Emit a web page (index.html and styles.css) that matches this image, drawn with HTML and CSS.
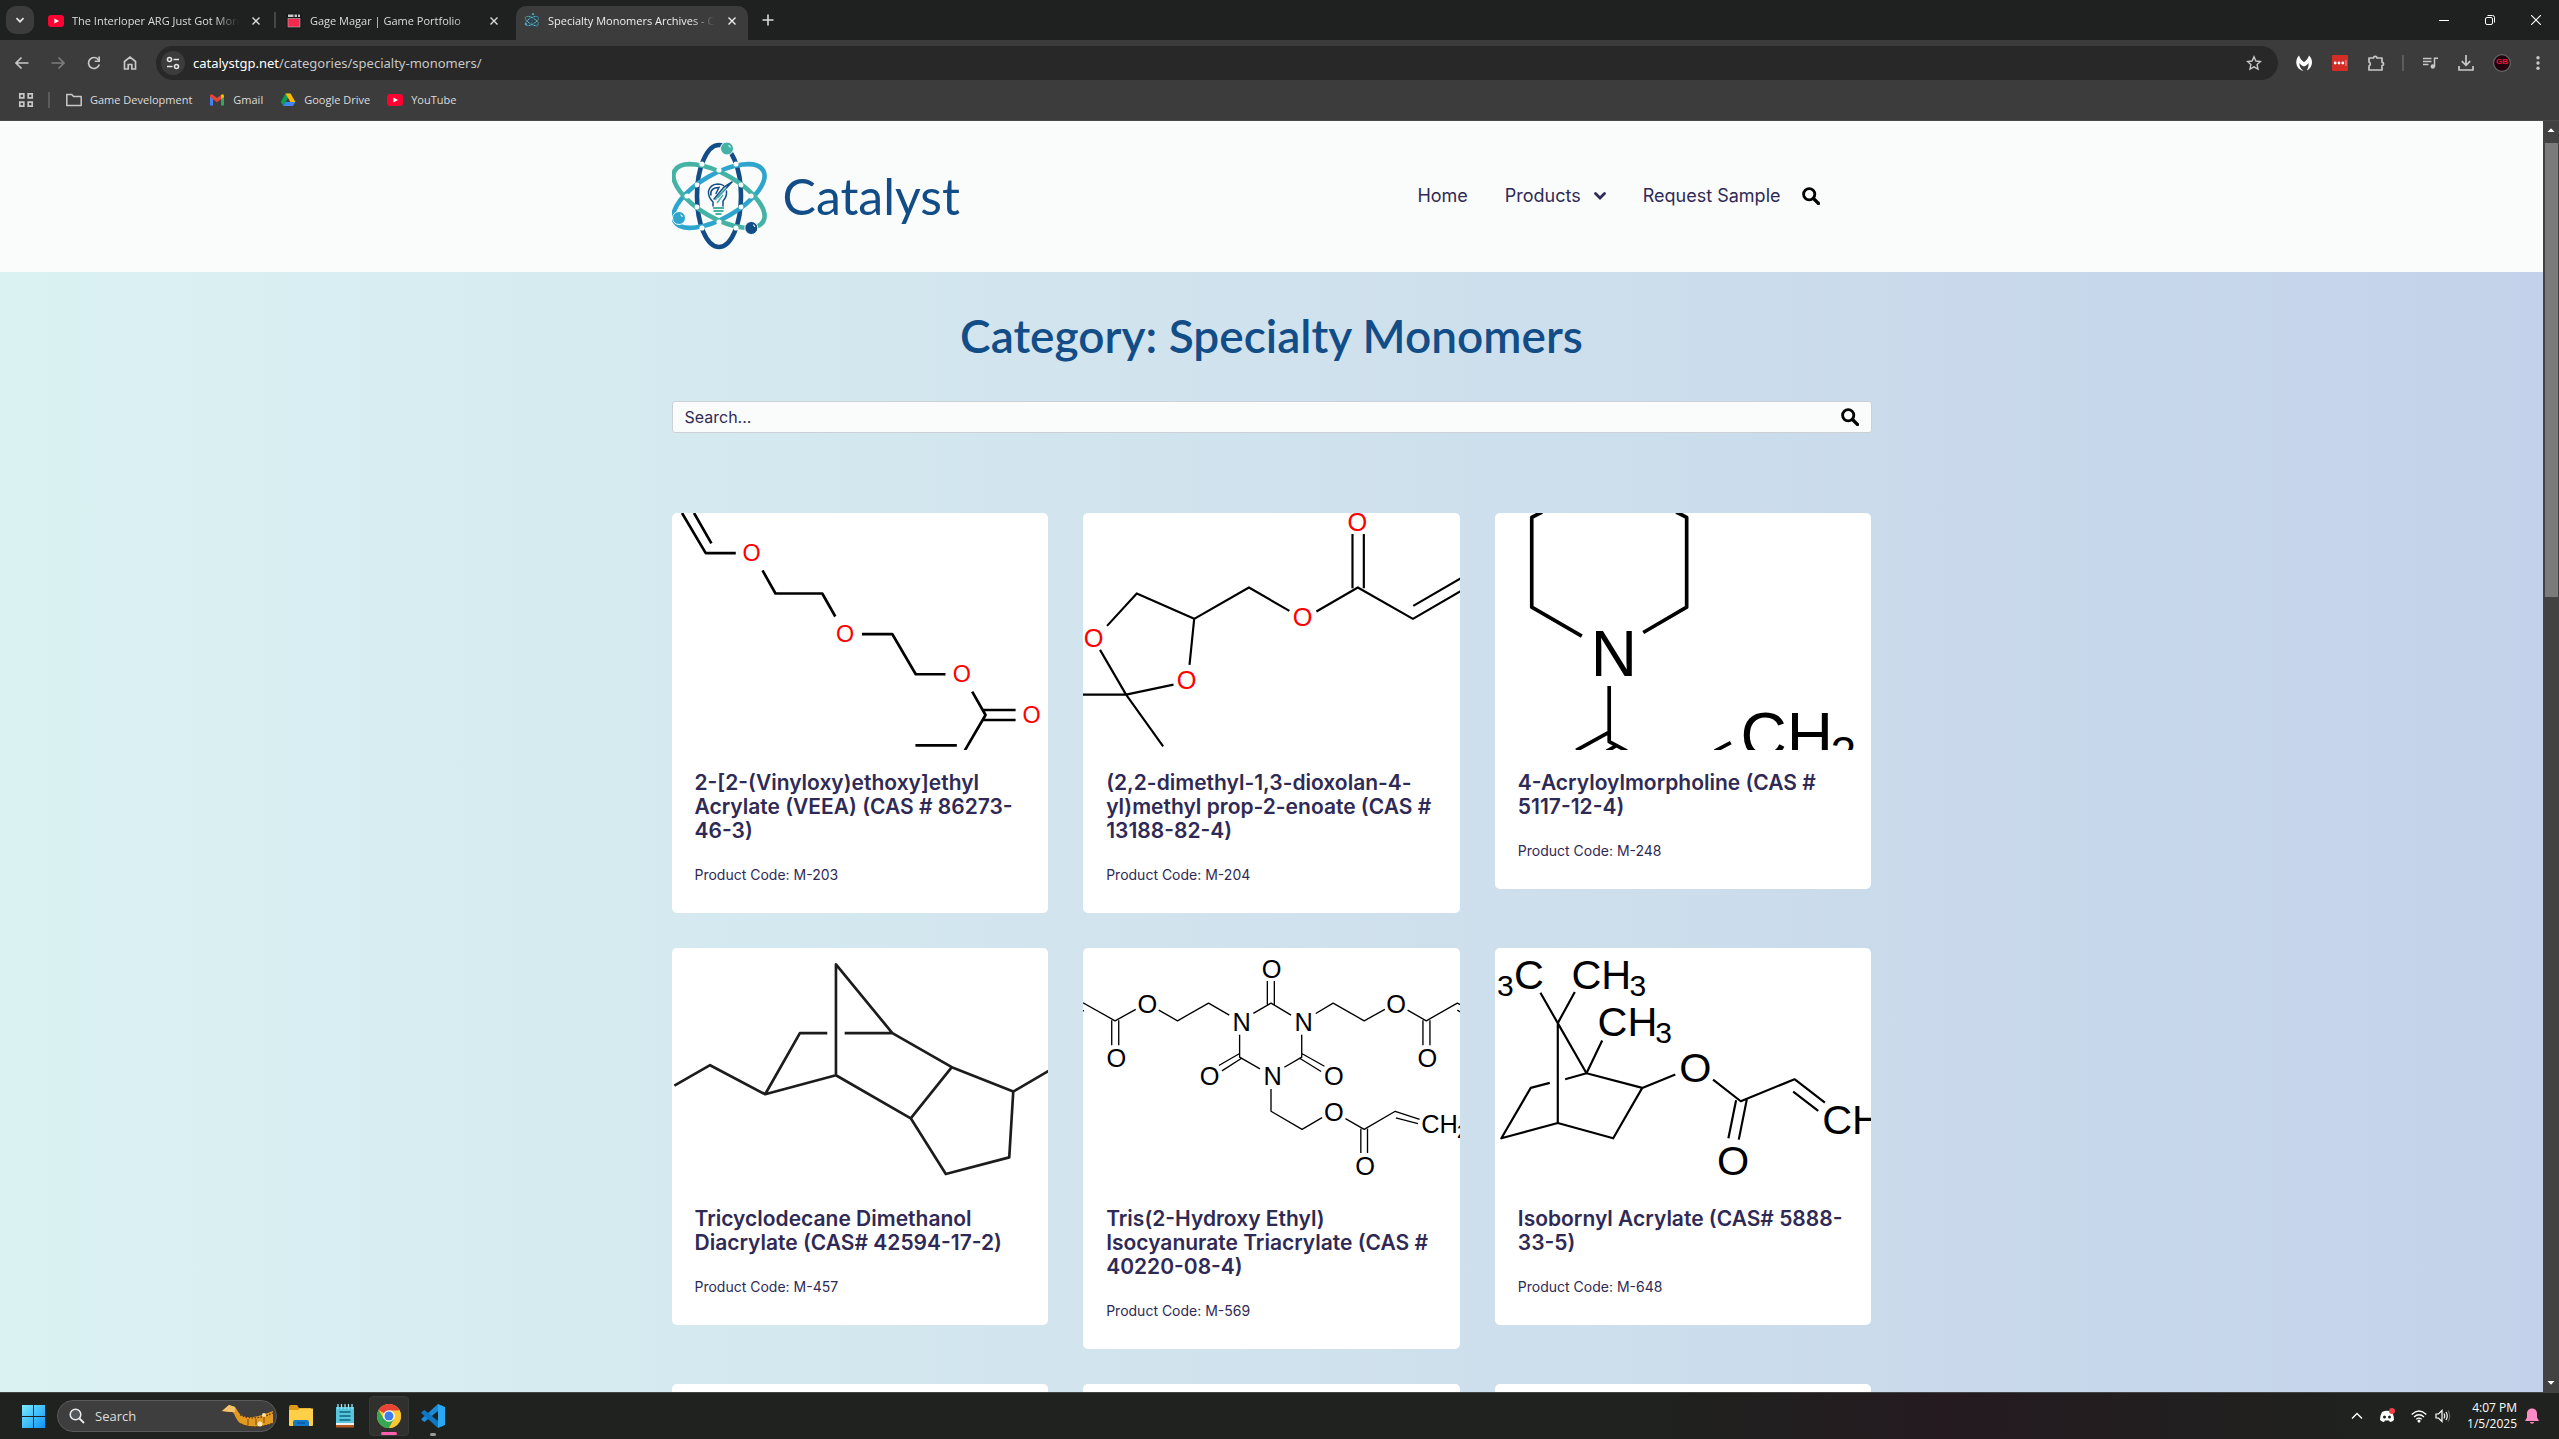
FILE: index.html
```html
<!DOCTYPE html>
<html lang="en">
<head>
<meta charset="utf-8">
<title>Specialty Monomers Archives - Catalyst</title>
<link rel="stylesheet" href="styles.css">
</head>
<body>
<svg class="defs" aria-hidden="true">
  <symbol id="close" viewBox="0 0 10 10"><path d="M1.5 1.5l7 7M8.5 1.5l-7 7" stroke="currentColor" stroke-width="1.4" fill="none"/></symbol>
  <symbol id="yt" viewBox="0 0 16 16"><rect y="2" width="16" height="12" rx="3" fill="#ff0033"/><path d="M6.4 5.4v5.2L11 8z" fill="#fff"/></symbol>
  <symbol id="search" viewBox="0 0 18 18"><circle cx="7.2" cy="7.2" r="5.6" fill="none" stroke="currentColor" stroke-width="2.8"/><path d="M11.5 11.5l5 5" stroke="currentColor" stroke-width="3.2" stroke-linecap="round"/></symbol>
  <symbol id="atom" viewBox="0 0 96 110">
    <g fill="none" stroke-width="4.6">
      <ellipse cx="47" cy="55" rx="22" ry="51" stroke="#124d87"/>
      <ellipse cx="47" cy="55" rx="22" ry="51" stroke="#2ea5cd" transform="rotate(60 47 55)"/>
      <ellipse cx="47" cy="55" rx="22" ry="51" stroke="#44b3a5" transform="rotate(-60 47 55)"/>
    </g>
    <g fill="#fafcfb"><circle cx="30" cy="23" r="2.6"/><circle cx="64" cy="23" r="2.6"/><circle cx="47" cy="29" r="2.6"/><circle cx="15" cy="55" r="2.6"/><circle cx="79" cy="55" r="2.6"/><circle cx="47" cy="81" r="2.6"/><circle cx="30" cy="87" r="2.6"/><circle cx="64" cy="87" r="2.6"/><circle cx="25" cy="44" r="2.4"/><circle cx="69" cy="44" r="2.4"/><circle cx="25" cy="66" r="2.4"/><circle cx="69" cy="66" r="2.4"/></g>
    <g stroke="#fafcfb" stroke-width="1"><circle cx="55" cy="7.500" r="6.500" fill="#44b3a5"/><circle cx="7" cy="77" r="6.500" fill="#2ea5cd"/><circle cx="79.300" cy="87" r="6.500" fill="#124d87"/></g>
    <g fill="none" stroke="#fafcfb" stroke-width="1.200"><path d="M56.500 4.500q1.500.5 1.800 2M8.500 73.800q1.500.5 1.800 2M81 83.800q1.500.5 1.800 2"/></g>
    <g fill="none" stroke="#124d87" stroke-width="1.500" stroke-linecap="round"><path d="M41 65v-4q-5-5-4.500-10.500 1.500-7 9-7.500 4 0 6 1.500M51 65v-5q4-4 3.500-10M39 54q-1-5 4-7l4-.5-3 6M60 41l-14 15M60 41l-8 5-10 12"/></g>
    <path d="M43 59l11-12M45 62l6-8" stroke="#44b3a5" stroke-width="1.400"/>
    <path d="M41 67h11M41.500 70h10M43.500 73h6" stroke="#44b3a5" stroke-width="1.800"/>
  </symbol>
</svg>

<header class="chrome">
  <div class="tabstrip">
    <button class="tab-search" aria-label="Search tabs"><svg width="10" height="10" viewBox="0 0 10 10"><path d="M1.500 3.200L5 6.700l3.500-3.500" stroke="#e3e3e3" stroke-width="1.700" fill="none"/></svg></button>
    <div class="tab"><svg width="16" height="16"><use href="#yt"/></svg><span class="tab-title">The Interloper ARG Just Got More Complicated</span><button class="tab-close" aria-label="Close"><svg width="10" height="10"><use href="#close"/></svg></button></div>
    <span class="tab-sep"></span>
    <div class="tab"><svg width="16" height="16" viewBox="0 0 16 16"><rect x=".5" y=".5" width="15" height="15" rx="1" fill="#161616"/><path d="M2 1.500h5.500v2.500H2zM8.500 1.500H11V4H8.500zM12 1.500h2V4h-2z" fill="#c8c8c8"/><rect x="2" y="5.500" width="12" height="8.500" fill="#f2294e" stroke="#b9b9b9" stroke-width=".6"/></svg><span class="tab-title">Gage Magar | Game Portfolio</span><button class="tab-close" aria-label="Close"><svg width="10" height="10"><use href="#close"/></svg></button></div>
    <span class="tab-sep hidden"></span>
    <div class="tab active"><svg width="16" height="16"><use href="#atom"/></svg><span class="tab-title">Specialty Monomers Archives - Catalyst</span><button class="tab-close" aria-label="Close"><svg width="10" height="10"><use href="#close"/></svg></button></div>
    <button class="new-tab" aria-label="New tab"><svg width="12" height="12" viewBox="0 0 12 12"><path d="M6 .5v11M.5 6h11" stroke="#dadada" stroke-width="1.600"/></svg></button>
    <div class="window-controls">
      <button aria-label="Minimize"><svg width="10" height="10" viewBox="0 0 10 10"><path d="M0 5.500h10" stroke="#fff"/></svg></button>
      <button aria-label="Restore"><svg width="10" height="10" viewBox="0 0 10 10"><rect x=".5" y="2.500" width="7" height="7" rx="1.500" fill="none" stroke="#fff"/><path d="M2.500.5h5a2 2 0 0 1 2 2v5" fill="none" stroke="#fff"/></svg></button>
      <button aria-label="Close window"><svg width="10" height="10" viewBox="0 0 10 10"><path d="M0 0l10 10M10 0L0 10" stroke="#fff" stroke-width="1.100"/></svg></button>
    </div>
  </div>

  <div class="toolbar">
    <button class="tool" aria-label="Back"><svg width="16" height="16" viewBox="0 0 16 16"><path d="M14.500 8H2M7.500 2.500L2 8l5.500 5.500" fill="none" stroke="#c7c7c7" stroke-width="1.700"/></svg></button>
    <button class="tool" aria-label="Forward"><svg width="16" height="16" viewBox="0 0 16 16"><path d="M1.500 8H14M8.500 2.500L14 8l-5.500 5.500" fill="none" stroke="#7c7c7c" stroke-width="1.700"/></svg></button>
    <button class="tool" aria-label="Reload"><svg width="16" height="16" viewBox="0 0 16 16"><path d="M13.300 9.500A5.500 5.500 0 1 1 12.500 4.800L13.500 6" fill="none" stroke="#c7c7c7" stroke-width="1.700"/><path d="M14 1.500v5.500H8.700V5.400h3.600V1.500z" fill="#c7c7c7"/></svg></button>
    <button class="tool" aria-label="Home"><svg width="16" height="16" viewBox="0 0 16 16"><path d="M2.500 14V6.500L8 2l5.500 4.500V14h-3.700V9.500H6.200V14z" fill="none" stroke="#c7c7c7" stroke-width="1.700"/></svg></button>
    <div class="omnibox">
      <button class="site-info" aria-label="Site information"><svg width="16" height="16" viewBox="0 0 16 16" fill="none" stroke="#e3e3e3" stroke-width="1.600"><circle cx="4.500" cy="4.500" r="2"/><path d="M8.500 4.500H14M2 11.500h5.500"/><circle cx="11.500" cy="11.500" r="2"/></svg></button>
      <span class="url"><b>catalystgp.net</b>/categories/specialty-monomers/</span>
      <button class="tool star" aria-label="Bookmark this tab"><svg width="16" height="16" viewBox="0 0 16 16"><path d="M8 1.800l1.900 4.200 4.600.5-3.400 3.100.9 4.500L8 11.800l-4 2.300.9-4.500L1.500 6.500 6.100 6z" fill="none" stroke="#c7c7c7" stroke-width="1.400"/></svg></button>
    </div>
    <div class="extensions">
      <button class="tool" aria-label="Malwarebytes"><svg width="16" height="16" viewBox="0 0 16 16"><path d="M3 .5c1 3 3 5.500 5 6.500 2-1 4-3.500 5-6.500 3.500 3 4 8.500 1 12.500-1 1.200-2 2-3.200 2.500 1.500-2.500 2-5 1.700-7.500C11.300 9.600 9.700 11 8 11.500 6.300 11 4.700 9.600 3.500 8 3.200 10.500 4 13.500 7.500 15.700 1 15-2.500 6.500 3 .5z" fill="#fff"/></svg></button>
      <button class="tool" aria-label="LastPass"><svg width="16" height="16" viewBox="0 0 16 16"><rect width="16" height="16" rx="1" fill="#d32d27"/><circle cx="3.200" cy="8" r="1.400" fill="#fff"/><circle cx="7" cy="8" r="1.400" fill="#fff"/><circle cx="10.800" cy="8" r="1.400" fill="#fff"/><path d="M14 5v6" stroke="#f2a19e"/></svg></button>
      <button class="tool" aria-label="Extensions"><svg width="18" height="18" viewBox="0 0 18 18"><path d="M2 4h4.500a1.700 1.700 0 0 1 3.400 0H15v4.300a1.600 1.600 0 0 1 0 3.200V16H2v-4a2.200 2.200 0 0 0 0-4z" fill="none" stroke="#c7c7c7" stroke-width="1.700" stroke-linejoin="round"/></svg></button>
      <span class="tool-sep"></span>
      <button class="tool" aria-label="Media controls"><svg width="16" height="16" viewBox="0 0 16 16"><path d="M1 3.500h8.500M1 6.500h8.500M1 9.500h5.500M12.500 12V3.200H16" fill="none" stroke="#c7c7c7" stroke-width="1.500"/><circle cx="10.800" cy="11.500" r="2.200" fill="#c7c7c7"/></svg></button>
      <button class="tool" aria-label="Downloads"><svg width="16" height="16" viewBox="0 0 16 16"><path d="M8 0v10M3.800 6.200L8 10.400l4.200-4.200M1 11v4h14v-4" fill="none" stroke="#c7c7c7" stroke-width="1.700"/></svg></button>
      <button class="tool" aria-label="Profile"><svg width="18" height="18" viewBox="0 0 18 18"><circle cx="9" cy="9" r="8.400" fill="#22030d" stroke="#66686a" stroke-width="1.200"/><text x="9" y="10" text-anchor="middle" class="avatar-text">GB</text></svg></button>
      <button class="tool" aria-label="Menu"><svg width="16" height="16" viewBox="0 0 16 16" fill="#c7c7c7"><circle cx="8" cy="2.800" r="1.700"/><circle cx="8" cy="8" r="1.700"/><circle cx="8" cy="13.200" r="1.700"/></svg></button>
    </div>
  </div>

  <nav class="bookmarks" aria-label="Bookmarks">
    <a href="#" aria-label="Apps"><svg width="16" height="16" viewBox="0 0 16 16" fill="none" stroke="#c7c7c7" stroke-width="1.700"><path d="M1.800 1.800h4v4h-4zM10.200 1.800h4v4h-4zM1.800 10.200h4v4h-4zM10.200 10.200h4v4h-4z"/></svg></a>
    <span class="mark-sep"></span>
    <a href="#"><svg width="16" height="16" viewBox="0 0 16 16"><path d="M.8 13.500V2.500h5l1.700 2h7.700v9z" fill="none" stroke="#c7c7c7" stroke-width="1.500" stroke-linejoin="round"/></svg>Game Development</a>
    <a href="#"><svg width="16" height="16" viewBox="0 0 16 16"><path d="M1 4v9.500h3V7z" fill="#4285f4"/><path d="M15 4v9.500h-3V7z" fill="#34a853"/><path d="M1 5V3.500Q2.500 1.500 4 3l4 3 4-3v4.200l-4 3-4-3z" fill="#ea4335"/><path d="M12 3q2-1.500 3 .5V5l-3 2.300z" fill="#fbbc04"/></svg>Gmail</a>
    <a href="#"><svg width="16" height="16" viewBox="0 0 16 16"><path d="M5.500 1.500h5L8 6 3.300 14 .8 10z" fill="#0f9d58"/><path d="M5.500 1.500h5l4.900 8.500h-5z" fill="#ffba00"/><path d="M5.500 10h9.900l-2.500 4H3.300z" fill="#4285f4"/></svg>Google Drive</a>
    <a href="#"><svg width="16" height="16"><use href="#yt"/></svg>YouTube</a>
  </nav>
</header>

<div class="view">
  <div class="page">
    <header class="site-header">
      <div class="wrap site-bar">
        <a class="logo" href="#"><svg width="96" height="110"><use href="#atom"/></svg><span>Catalyst</span></a>
        <nav class="menu">
          <a href="#">Home</a>
          <a href="#">Products<svg class="caret" width="12" height="8" viewBox="0 0 12 8"><path d="M1.500 1.500L6 6l4.500-4.500" fill="none" stroke="#2f2a55" stroke-width="2.700" stroke-linecap="round"/></svg></a>
          <a href="#">Request Sample</a>
          <button class="icon-button" aria-label="Search"><svg width="18" height="18"><use href="#search"/></svg></button>
        </nav>
      </div>
    </header>
    <main class="wrap">
      <h1>Category: Specialty Monomers</h1>
      <form class="search">
        <input type="search" placeholder="Search..." aria-label="Search products">
        <button type="button" class="icon-button" aria-label="Search"><svg width="18" height="18"><use href="#search"/></svg></button>
      </form>
      <div class="grid">
        <article class="card">
          <svg class="figure" viewBox="36 39 1128 711" stroke-width="8">
            <path d="M66 39L137 159H227M102 39L154 130M307 211L346 280H486L525 349M605 402H696L766 522H855M935 574L975 644L913 750M968 629H1065M968 659H1065M765 735H889"/>
            <g class="atom red s70"><text x="274" y="182">O</text><text x="554" y="426">O</text><text x="904" y="546">O</text><text x="1113" y="668">O</text></g>
          </svg>
          <div class="card-body"><h2>2-[2-(Vinyloxy)ethoxy]ethyl Acrylate (VEEA) (CAS # 86273-46-3)</h2><p>Product Code: M-203</p></div>
        </article>
        <article class="card">
          <svg class="figure" viewBox="39 39 1128 711" stroke-width="6.500">
            <path d="M111 377L200 280L372 356L358 494M372 356L536 262L657 332M738 334L862 262L1027 356L1170 273M1028 317L1170 235M846 264V102M880 264V102M90 449L168 583H39M168 583L310 553M168 583L279 738"/>
            <g class="atom red s76"><text x="71" y="440">O</text><text x="349" y="565">O</text><text x="697" y="377">O</text><text x="861" y="94">O</text></g>
          </svg>
          <div class="card-body"><h2>(2,2-dimethyl-1,3-dioxolan-4-yl)methyl prop-2-enoate (CAS # 13188-82-4)</h2><p>Product Code: M-204</p></div>
        </article>
        <article class="card">
          <svg class="figure" viewBox="45 39 1128 711" stroke-width="11">
            <path d="M186 36L155 52V321L305 408M588 36L619 52V321L489 397M387 557V724L440 752M387 695L288 750M408 736L380 752M751 727L703 752"/>
            <g class="atom s192"><text x="401" y="527">N</text><text class="left" x="780" y="774">CH</text><text class="left sub" x="1050" y="807">2</text></g>
          </svg>
          <div class="card-body"><h2>4-Acryloylmorpholine (CAS # 5117-12-4)</h2><p>Product Code: M-248</p></div>
        </article>
        <article class="card">
          <svg class="figure" viewBox="36 54 1128 711" stroke-width="8">
            <path class="soft" d="M43 466L150 405L315 492L527 435V103L696 309H553M501 309H419L315 492M527 435L751 564L874 411L696 309M874 411L1058 484L1164 422M1058 484L1046 681L856 731L751 564"/>
          </svg>
          <div class="card-body"><h2>Tricyclodecane Dimethanol Diacrylate (CAS# 42594-17-2)</h2><p>Product Code: M-457</p></div>
        </article>
        <article class="card">
          <svg class="figure" viewBox="39 54 1128 711" stroke-width="4">
            <path d="M39 218L135 272L197 238M125 270V345M146 270V345M266 240L322 272L415 219L477 255M549 250L602 219L662 255M591 223V153M612 223V153M736 250L788 219L881 272L943 238M1011 240L1067 272L1160 219L1170 224M1057 270V345M1078 270V345M1160 240L1170 246M39 242H42M508 314V381L569 416M508 370L446 406M514 384L455 422M694 314V381L642 411M694 370L762 408M688 384L752 424M602 476V543L695 597L755 562M825 565L881 597L974 543L1047 567M976 563L1042 580M871 595V668M891 595V668"/>
            <g class="atom s76"><text x="604" y="143">O</text><text x="232" y="250">O</text><text x="977" y="250">O</text><text x="514" y="302">N</text><text x="700" y="302">N</text><text x="139" y="411">O</text><text x="1070" y="411">O</text><text x="418" y="465">O</text><text x="790" y="465">O</text><text x="607" y="464">N</text><text x="790" y="572">O</text><text x="884" y="735">O</text><text class="left" x="1052" y="609">CH</text><text class="left sub" x="1159" y="622">2</text></g>
          </svg>
          <div class="card-body"><h2>Tris(2-Hydroxy Ethyl) Isocyanurate Triacrylate (CAS # 40220-08-4)</h2><p>Product Code: M-569</p></div>
        </article>
        <article class="card">
          <svg class="figure" viewBox="45 54 1128 711" stroke-width="6.500">
            <path d="M181 188L233 279L284 186M233 279V578L399 624L486 473L319 429L233 279M366 331L319 429L255 447M209 458L152 473L64 624L233 578M486 473L585 433M698 448L781 513L942 447L1033 517M938 484L1013 542M767 510L744 624M799 508L775 628"/>
            <g class="atom s124"><text x="645" y="455">O</text><text x="758" y="734">O</text><text class="left" x="102" y="176">C</text><text class="left" x="274" y="176">CH</text><text class="left" x="352" y="318">CH</text><text class="left" x="1025" y="612">CH</text><text class="left sub" x="51" y="198">3</text><text class="left sub" x="448" y="198">3</text><text class="left sub" x="525" y="340">3</text></g>
          </svg>
          <div class="card-body"><h2>Isobornyl Acrylate (CAS# 5888-33-5)</h2><p>Product Code: M-648</p></div>
        </article>
        <article class="card"><svg class="figure" viewBox="0 0 1128 711"></svg></article>
        <article class="card"><svg class="figure" viewBox="0 0 1128 711"></svg></article>
        <article class="card"><svg class="figure" viewBox="0 0 1128 711"></svg></article>
      </div>
    </main>
  </div>
  <div class="scrollbar" aria-hidden="true">
    <svg width="16" height="22" viewBox="0 0 16 22"><path d="M4.500 11L8 7.300l3.500 3.700z" fill="#fff"/></svg>
    <div class="track"><div class="thumb"></div></div>
    <svg width="16" height="22" viewBox="0 0 16 22"><path d="M4.500 11L8 14.700l3.500-3.700z" fill="#fff"/></svg>
  </div>
</div>

<footer class="taskbar">
  <button class="task start" aria-label="Start"><svg width="23" height="23" viewBox="0 0 23 23"><defs><linearGradient id="win" x2="1" y2="1"><stop stop-color="#7aecff"/><stop offset="1" stop-color="#0c92f5"/></linearGradient></defs><path d="M0 0h11v11H0zM12 0h11v11H12zM0 12h11v11H0zM12 12h11v11H12z" fill="url(#win)"/></svg></button>
  <button class="task-search">
    <svg width="16" height="16" viewBox="0 0 16 16"><circle cx="6.500" cy="6.500" r="5.300" fill="#55595c" stroke="#eee" stroke-width="1.500"/><path d="M10.500 10.500l4.500 4.500" stroke="#eee" stroke-width="1.800"/></svg>
    <span>Search</span>
    <svg class="film" width="52" height="24" viewBox="0 0 52 24"><path d="M0 7L7 1l6 2c3 3 3 7 8 9 8 3 18 0 30-5v12c-10 4-25 5-33 0-5-4-5-10-8-11z" fill="#e39a22"/><path d="M0 7L7 1l6 2v5H8z" fill="#f6c36a"/><path d="M18 11c10 5 22 3 33-2M19 20c10 5 22 3 32-1" fill="none" stroke="#5a3303" stroke-width="1.200" stroke-dasharray="1.500 1.500"/><path d="M26 15v6M34 15v6M42 13v6" stroke="#9a5c08" stroke-width="1.300"/><circle cx="42" cy="11" r="2" fill="#ffe2a0"/><circle cx="38" cy="20" r="2.500" fill="#ffe8b5"/></svg>
  </button>
  <button class="task" aria-label="File Explorer"><svg width="24" height="22" viewBox="0 0 24 22"><path d="M0 2q0-2 2-2h6l2 3h12v6H0z" fill="#dd9a12"/><path d="M0 5h9l2-1.500h13V20q0 1-1 1H1q-1 0-1-1z" fill="#ffcf48"/><path d="M4 21v-4q0-2 2-2h12q2 0 2 2v4z" fill="#1479c9"/><path d="M8 18h8" stroke="#0c5ba0" stroke-width="1.500"/></svg></button>
  <button class="task" aria-label="Notepad"><svg width="20" height="24" viewBox="0 0 20 24"><path d="M1 3h18v16H1z" fill="#56c5de"/><path d="M1 19h18v2H1z" fill="#f1f1f1"/><path d="M1 21h18v2.500H1z" fill="#b3591e"/><path d="M3 0v5M6.500 0v5M10 0v5M13.500 0v5M17 0v5" stroke="#9be3f1" stroke-width="1.300"/><path d="M4.500 8h11M4.500 12h11M4.500 16h11" stroke="#0f6278" stroke-width="1.600"/></svg></button>
  <button class="task current" aria-label="Google Chrome"><svg width="24" height="24" viewBox="0 0 24 24"><circle cx="12" cy="12" r="12" fill="#fcc934"/><path d="M12 12L1.600 6A12 12 0 0 1 22.400 6z" fill="#ea4335"/><path d="M12 12H12L6.800 15 1.600 6A12 12 0 0 0 12 24l5.200-9z" fill="#34a853"/><path d="M12 6.500h10.700A12 12 0 0 1 12 24l5-9z" fill="#fcc934"/><circle cx="12" cy="12" r="5.800" fill="#fff"/><circle cx="12" cy="12" r="4.500" fill="#3b7ded"/></svg></button>
  <button class="task open" aria-label="Visual Studio Code"><svg width="24" height="24" viewBox="0 0 24 24"><path d="M17 0l7 3v18l-7 3z" fill="#2aa9f2"/><path d="M17 0v7L3.500 18 .5 16V14.800z" fill="#1b8ad8"/><path d="M17 24v-7L3.500 6 .5 8v1.200z" fill="#0f77c4"/></svg></button>
  <div class="tray">
    <button aria-label="Show hidden icons"><svg width="12" height="8" viewBox="0 0 12 8"><path d="M1 6.500l5-5 5 5" fill="none" stroke="#fff" stroke-width="1.400"/></svg></button>
    <button aria-label="Discord"><svg width="16" height="16" viewBox="0 0 16 16"><path d="M3 4q5-2.500 10 0 2 3.500 2 8-2 2-4 2l-1-1.500H6L5 14q-2 0-4-2 0-4.500 2-8z" fill="#fff"/><circle cx="5.500" cy="9" r="1.500" fill="#20211f"/><circle cx="10.500" cy="9" r="1.500" fill="#20211f"/><circle cx="13" cy="3" r="3" fill="#f23f42"/></svg></button>
    <button aria-label="Network"><svg width="16" height="14" viewBox="0 0 16 14"><g fill="none" stroke="#fff" stroke-width="1.300"><path d="M.7 5.500Q8-1.500 15.300 5.500M3 8q5-4.500 10 0M5.300 10.300q2.700-2.300 5.400 0"/></g><circle cx="8" cy="12" r="1.500" fill="#fff"/></svg></button>
    <button class="volume" aria-label="Volume"><svg width="16" height="14" viewBox="0 0 16 14" fill="none" stroke="#fff" stroke-width="1.200"><path d="M1 5v4h2.500L7 12.500v-11L3.500 5zM9 4.500q1.500 2.500 0 5M11 3q2.500 4 0 8"/><path d="M13 1.500q3.500 5.500 0 11" stroke="#666"/></svg></button>
    <div class="clock"><span>4:07 PM</span><span>1/5/2025</span></div>
    <button class="bell" aria-label="Notifications"><svg width="14" height="16" viewBox="0 0 14 16"><path d="M7 .5c3.200 0 5 2.200 5 5v4l1.700 2.700v.8H.3v-.8L2 9.500v-4c0-2.800 1.800-5 5-5zM4.800 14h4.400q-.5 1.700-2.200 1.700T4.800 14z" fill="#ff8ac6"/></svg></button>
  </div>
</footer>
</body>
</html>
```
FILE: styles.css
```css
* { box-sizing: border-box; }
body {
  margin: 0;
  height: 100vh;
  display: flex;
  flex-direction: column;
  overflow: hidden;
  background: #20211f;
  color: #2f2a55;
  font-family: Inter, "Liberation Sans", sans-serif;
}
button { border: 0; padding: 0; background: none; color: inherit; font: inherit; }
a { color: inherit; text-decoration: none; }
svg { display: block; flex: none; }
h1, h2, p { margin: 0; }
.defs { position: absolute; width: 0; height: 0; }

/* browser frame */
.chrome { font: 12px/16px "Open Sans", "Noto Sans", sans-serif; color: #dcdcdc; flex: none; }
.tabstrip { display: flex; align-items: center; height: 40px; background: #1f2120; padding-left: 6px; }
.tab-search { width: 28px; height: 28px; border-radius: 10px; background: #3c3c3c; display: grid; place-items: center; margin-right: 6px; }
.tab { display: flex; align-items: center; width: 232px; height: 34px; align-self: flex-end; padding: 0 11px 4px 8px; gap: 8px; }
.tab.active { background: #3c3c3c; border-radius: 10px 10px 0 0; color: #eee; }
.tab-title { flex: 1; overflow: hidden; white-space: nowrap; font-size: 11px; -webkit-mask-image: linear-gradient(90deg, #000 calc(100% - 24px), transparent); mask-image: linear-gradient(90deg, #000 calc(100% - 24px), transparent); }
.tab-close { margin-left: 4px; }
.tab-sep { width: 2px; height: 16px; margin: 0 2px; background: #464847; }
.tab-sep.hidden { background: none; }
.new-tab { margin-left: 14px; }
.window-controls { display: flex; margin-left: auto; height: 40px; }
.window-controls button { width: 46px; display: grid; place-items: center; }

.toolbar { display: flex; align-items: center; background: #3c3c3c; height: 46px; padding: 0 3px 0 4px; }
.tool { width: 36px; height: 34px; display: grid; place-items: center; }
.omnibox { flex: 1; height: 34px; margin: 0 8px; border-radius: 17px; background: #282828; display: flex; align-items: center; padding: 0 6px 0 5px; gap: 8px; }
.site-info { width: 24px; height: 24px; border-radius: 50%; background: #3c3c3c; display: grid; place-items: center; }
.url { flex: 1; font-family: "Noto Sans", sans-serif; font-size: 13px; color: #c7c7c7; }
.url b { font-weight: 400; color: #fff; }
.extensions { display: flex; align-items: center; }
.tool-sep { width: 2px; height: 16px; margin: 0 8px; background: #5c5c5c; }
.avatar-text { font: 700 8px "Liberation Sans", sans-serif; fill: #f40f3c; }

.bookmarks { display: flex; align-items: center; height: 35px; padding: 0 18px 7px; background: #3c3c3c; border-bottom: 1px solid #4a4a4a; gap: 17px; font-size: 11px; }
.bookmarks a { display: flex; align-items: center; gap: 8px; }
.mark-sep { width: 2px; height: 16px; margin: 0 -1px 0 -3px; background: #5c5c5c; }

/* web page */
.view { flex: 1; min-height: 0; display: flex; overflow: hidden; }
.page { flex: 1; overflow: hidden; background: linear-gradient(90deg, #dbf2f3, #d0e2ed 50%, #c3d2ea); }
.wrap { width: 1200px; max-width: 100%; margin: 0 auto; }
.site-header { background: #fafcfb; }
.site-bar { display: flex; align-items: center; justify-content: space-between; padding: 20px 52px 21px 0; }
.logo { display: flex; align-items: center; gap: 15px; font: 50px/64px Lato, sans-serif; color: #124d87; }
.menu { display: flex; align-items: center; gap: 37px; font-size: 18px; line-height: 24px; }
.menu a { display: flex; align-items: center; gap: 13px; }
.menu .icon-button { margin-left: -16px; }
.icon-button { color: #000; }
h1 { padding-top: 34px; text-align: center; font: 600 46px/60px Lato, sans-serif; color: #124d87; }
.search { display: flex; align-items: center; height: 32px; margin: 35px 0 80px; padding: 0 12px; background: #fafcfb; border: 1px solid #ccd1d8; border-radius: 3px; }
.search input { flex: 1; border: 0; padding: 0; background: none; outline: 0; font: 16px/24px Inter, sans-serif; color: inherit; }
.search input::placeholder { color: #2f2a55; opacity: 1; }
.grid { display: grid; grid-template-columns: repeat(3, 1fr); gap: 35px; align-items: start; }
.card { background: #fff; border-radius: 5px; overflow: hidden; }
.figure { width: 100%; height: auto; fill: none; stroke: #000; stroke-linejoin: round; }
.figure .soft { stroke: #1c1c1c; }
.atom { fill: #000; stroke: none; text-anchor: middle; font-family: "Liberation Sans", sans-serif; }
.red { fill: #f00; }
.left { text-anchor: start; }
.s70 { font-size: 70px; }
.s76 { font-size: 76px; }
.s124 { font-size: 124px; }
.s192 { font-size: 192px; }
.s76 .sub { font-size: 54px; }
.s124 .sub { font-size: 90px; }
.s192 .sub { font-size: 138px; }
.card-body { padding: 21px 23px 27px; }
.card h2 { font-size: 21px; line-height: 24px; font-weight: 600; margin-bottom: 21px; }
.card p { font-size: 14px; line-height: 22px; }

.scrollbar { width: 16px; flex: none; display: flex; flex-direction: column; background: #424242; }
.track { flex: 1; padding: 0 1px 0 2px; }
.thumb { height: 37%; background: #7b7b7b; }

/* taskbar */
.taskbar { flex: none; display: flex; align-items: center; height: 47px; border-top: 1px solid #444542; background: linear-gradient(90deg, #20221f 65%, #241a20 76%, #20221f 92%); color: #fff; font: 12px/16px "Open Sans", "Noto Sans", sans-serif; padding: 0 20px 0 13px; }
.task { position: relative; width: 40px; height: 40px; margin-right: 4px; border-radius: 4px; display: grid; place-items: center; }
.start { margin-right: 4px; }
.task-search { display: flex; align-items: center; gap: 10px; width: 220px; height: 32px; border: 1px solid #5a5a5a; border-radius: 16px; background: #3e3e3e; padding: 0 2px 0 11px; margin-right: 4px; color: #ddd; font-size: 13px; }
.film { margin-left: auto; }
.current { background: #30312f; border: 1px solid #393a38; }
.current::after, .open::after { content: ""; position: absolute; bottom: 0; left: 50%; width: 16px; height: 3px; margin-left: -8px; border-radius: 2px; background: #ff5fae; }
.open::after { width: 6px; margin-left: -3px; background: #9a9a9a; }
.tray { display: flex; align-items: center; margin-left: auto; gap: 16px; }
.volume { margin-left: -8px; }
.clock { display: flex; flex-direction: column; text-align: right; }
.bell { margin-left: -8px; }
```
